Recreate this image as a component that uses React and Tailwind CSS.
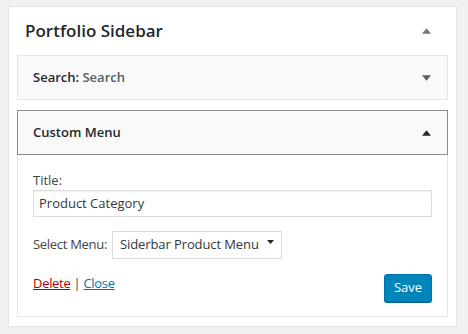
import React from 'react';

const font = { fontFamily: '"Open Sans", "Noto Sans", sans-serif' };

const Caret = ({ up, className }) => (
  <svg width="10" height="6" viewBox="0 0 10 6" className={className}>
    {up ? <path d="M0 6 L5 0 L10 6 Z" fill="currentColor" /> : <path d="M0 0 L5 6 L10 0 Z" fill="currentColor" />}
  </svg>
);

const App = () => {
  return (
    <div className="w-[468px] h-[334px] bg-[#f1f1f1] pt-[6px] pl-[8px]" style={font}>
      <div className="w-[449px] h-[321px] bg-white border border-[#e5e5e5] px-[8px]">
        <div className="flex items-center justify-between h-[48px] pl-[8px] pr-[17px]">
          <h2 className="text-[17px] font-semibold text-[#23282d]">Portfolio Sidebar</h2>
          <Caret up className="text-[#72777c] w-[9px] h-[6px]" />
        </div>

        <div className="flex items-center justify-between h-[45px] bg-[#f9f9f9] border border-[#e5e5e5] pl-[15px] pr-[16px]">
          <div className="text-[13px] font-semibold text-[#23282d]">
            Search: <span className="text-[#555d66]">Search</span>
          </div>
          <Caret className="text-[#555d66] w-[9px] h-[6px]" />
        </div>

        <div className="mt-[10px] border border-[#8c8c8c] bg-[#f9f9f9] h-[45px] flex items-center justify-between pl-[15px] pr-[16px]">
          <div className="text-[13px] font-semibold text-[#23282d]">Custom Menu</div>
          <Caret up className="text-[#23282d] w-[9px] h-[6px]" />
        </div>

        <div className="border border-t-0 border-[#e5e5e5] h-[162px] px-[15px] pt-[16px]">
          <div className="text-[13px] text-[#444] leading-[18px]">Title:</div>
          <div className="mt-[1px] h-[27px] border border-[#dddddd] flex items-center px-[5px] text-[13px] text-[#32373c] shadow-[inset_0_1px_2px_rgba(0,0,0,0.07)]">
            Product Category
          </div>
          <div className="flex items-center mt-[14px]">
            <span className="text-[13px] text-[#444] mr-[5px] tracking-[-0.3px]">Select Menu:</span>
            <div className="h-[28px] w-[170px] border border-[#dddddd] flex items-center justify-between pl-[7px] pr-[7px] text-[13px] text-[#32373c]">
              <span className="tracking-[-0.1px]">Siderbar Product Menu</span>
              <Caret className="text-[#23282d] w-[7px] h-[6px] -mt-[6px]" />
            </div>
          </div>
          <div className="flex justify-between items-start mt-[15px]">
            <div className="text-[13px] leading-[18px] text-[#444] tracking-[-0.3px]">
              <a className="text-[#a00] underline">Delete</a> | <a className="text-[#0073aa] underline">Close</a>
            </div>
            <button className="h-[28px] w-[48px] rounded-[3px] bg-[#0085ba] border border-[#0073aa] shadow-[0_1px_0_#006799] text-white text-[13px]">
              Save
            </button>
          </div>
        </div>
      </div>
    </div>
  );
};

export default App;
